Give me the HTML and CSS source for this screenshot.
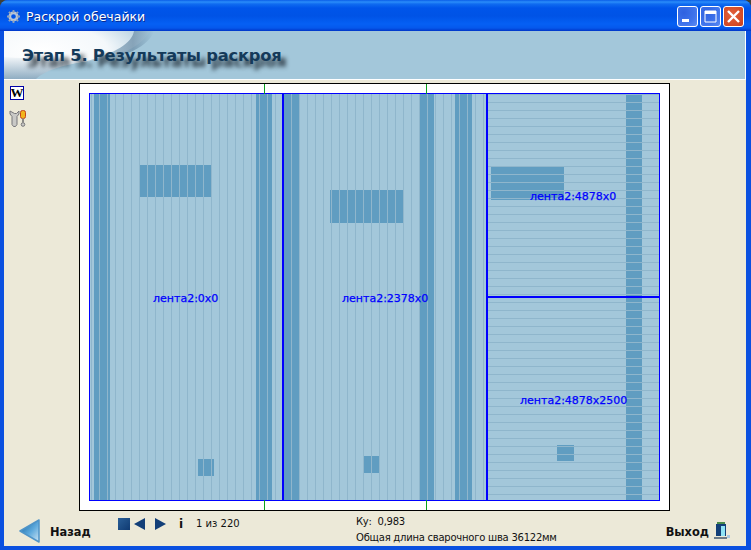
FILE: index.html
```html
<!DOCTYPE html>
<html lang="ru">
<head>
<meta charset="utf-8">
<title>Раскрой обечайки</title>
<link rel="stylesheet" href="styles.css">
</head>
<body>
<div class="window">
  <div class="titlebar">
    <svg class="app-icon" width="13" height="13" viewBox="0 0 14 14"><circle cx="7" cy="7" r="4" fill="none" stroke="#b9c6d6" stroke-width="3"/><path d="M7 0v3M7 11v3M0 7h3M11 7h3M2 2l2 2M10 10l2 2M12 2l-2 2M4 10l-2 2" stroke="#8fa2bc" stroke-width="2"/></svg>
    <span class="title-text">Раскрой обечайки</span>
    <div class="win-buttons">
      <div class="wbtn"><svg width="19" height="19" viewBox="0 0 19 19"><rect x="4" y="12" width="7" height="3" fill="#fff"/></svg></div>
      <div class="wbtn"><svg width="19" height="19" viewBox="0 0 19 19"><path d="M4 4h11v11H4z" fill="none" stroke="#fff"/><rect x="4" y="4" width="11" height="3" fill="#fff"/></svg></div>
      <div class="wbtn close"><svg width="19" height="19" viewBox="0 0 19 19"><path d="M4 4l11 11M15 4L4 15" stroke="#fff" stroke-width="2.4"/></svg></div>
    </div>
  </div>
  <div class="client">
    <div class="header">
      <svg class="swoosh" width="160" height="48" viewBox="0 0 160 48">
        <defs>
          <radialGradient id="sw" gradientUnits="userSpaceOnUse" cx="38" cy="20" r="110" gradientTransform="translate(0 12) scale(1 .4)"><stop offset="0" stop-color="#ffffff"/><stop offset=".6" stop-color="#f4f8fb"/><stop offset="1" stop-color="#b4d0e0"/></radialGradient>
          <linearGradient id="sw2" x1="0" y1="0" x2="1" y2="0"><stop offset="0" stop-color="#a3c7da"/><stop offset=".7" stop-color="#6f8fa8"/><stop offset="1" stop-color="#a3c7da"/></linearGradient>
          <linearGradient id="sw3" x1="0" y1="0" x2="0" y2="1"><stop offset="0" stop-color="#f2f6f9"/><stop offset="1" stop-color="#8fadc2"/></linearGradient>
        </defs>
        <path d="M0 0H146C138 15 116 27 78 31C60 33 30 38 0 48Z" fill="url(#sw)"/>
        <path d="M0 26C30 28 60 29 84 30C58 34 40 40 32 48H0Z" fill="url(#sw3)"/>
        <path d="M124 0H150C146 14 122 28 80 31C112 22 128 12 130 0Z" fill="url(#sw2)" opacity=".75"/>
      </svg>
      <h1 class="stage-title">Этап 5. Результаты раскроя</h1>
    </div>
    <div class="main">
      <aside class="sidebar">
        <div class="word-icon"><span>W</span></div>
        <svg class="tools-icon" width="18" height="17" viewBox="0 0 18 17">
          <path d="M1 1v3l2 2.500v8l1.500 2h2L8 14.500v-8L10 4V1L7.500 3.500h-2Z" fill="#c9c9c6" stroke="#77777a"/>
          <rect x="11.500" y="0.500" width="5" height="8" rx="2" fill="#f2b41a" stroke="#c4431a"/>
          <path d="M14 8.500v4" stroke="#8a8a86" stroke-width="2"/>
          <circle cx="14" cy="14.500" r="1.800" fill="#c9c9c6" stroke="#77777a"/>
        </svg>
      </aside>
      <div class="content">
        <div class="canvas">
          <i class="tick tick-t1"></i><i class="tick tick-t2"></i><i class="tick tick-b1"></i><i class="tick tick-b2"></i>
          <div class="plot">
            <section class="panel vert p1">
              <div class="dark d1"></div><div class="dark d2"></div><div class="dark d3"></div><div class="dark d4"></div>
              <span class="label l1">лента2:0x0</span>
            </section>
            <section class="panel vert p2">
              <div class="dark d5"></div><div class="dark d6"></div><div class="dark d7"></div><div class="dark d8"></div><div class="dark d9"></div>
              <span class="label l2">лента2:2378x0</span>
            </section>
            <div class="stack">
              <section class="panel horiz p3">
                <div class="dark col"></div><div class="dark d10"></div>
                <span class="label l3">лента2:4878x0</span>
              </section>
              <section class="panel horiz p4">
                <div class="dark col"></div><div class="dark d11"></div>
                <span class="label l4">лента2:4878x2500</span>
              </section>
            </div>
          </div>
        </div>
      </div>
    </div>
    <footer class="footer">
      <div class="back">
        <svg width="22" height="24" viewBox="0 0 22 24">
          <defs><linearGradient id="ar" x1="0" y1="0" x2="1" y2="1"><stop offset="0" stop-color="#0d5f9e"/><stop offset=".55" stop-color="#5da9dc"/><stop offset="1" stop-color="#cfe6f5"/></linearGradient></defs>
          <path d="M20 1V23L1 12Z" fill="url(#ar)" stroke="#4f94c8" stroke-width="1.500" stroke-linejoin="round"/>
        </svg>
        <b>Назад</b>
      </div>
      <div class="nav">
        <div class="nav-icons">
          <i class="stop"></i>
          <svg width="11" height="12" viewBox="0 0 11 12"><path d="M11 0V12L0 6Z" fill="#123f78"/></svg>
          <svg class="next" width="11" height="12" viewBox="0 0 11 12"><path d="M0 0V12L11 6Z" fill="#123f78"/></svg>
          <b class="info">i</b>
        </div>
        <span class="count">1 из 220</span>
      </div>
      <div class="stats">
        <div class="ku">Ку:&nbsp; 0,983</div>
        <div>Общая длина сварочного шва 36122мм</div>
      </div>
      <div class="exit">
        <b>Выход</b>
        <svg width="16" height="18" viewBox="0 0 16 18"><rect x="3" y="1" width="8" height="2" fill="#4a8a4a"/><rect x="2" y="3" width="10" height="12" fill="#123f78"/><rect x="7" y="5" width="4" height="10" fill="#8fe4f5"/><path d="M0 16h13v2H0z" fill="#6b7b88"/><path d="M13 14h3v3h-3z" fill="#a9c8e0"/></svg>
      </div>
    </footer>
  </div>
</div>
</body>
</html>
```
FILE: styles.css
```css
* { box-sizing: border-box; }
html, body { margin: 0; padding: 0; background: #3f4038; }
body { width: 751px; height: 550px; overflow: hidden; font-family: "DejaVu Sans", sans-serif; }

.window {
  width: 751px; height: 550px; display: flex; flex-direction: column;
  border-radius: 8px 8px 0 0; overflow: hidden; background: #0a50e0;
}
.titlebar {
  height: 31px; flex: none; display: flex; align-items: center; padding: 0 7px 0 7px;
  background: linear-gradient(180deg, #0a5ee8 0, #2a8dfa 2px, #0f6bf0 4px, #0055ea 8px, #0053e6 16px, #0560f4 24px, #0558ec 28px, #0036c8 31px);
}
.app-icon { flex: none; margin-top: 2px; }
.title-text { margin-left: 6px; margin-top: 2px; color: #fff; font-size: 12.500px; text-shadow: 1px 1px 0 #0a2a8c; }
.win-buttons { margin-left: auto; display: flex; gap: 2px; margin-top: 1px; }
.wbtn {
  width: 21px; height: 21px; border: 1px solid #fff; border-radius: 3px;
  background: radial-gradient(circle at 30% 30%, #2f61e0, #3f74ec 60%, #5c8cf2);
}
.wbtn svg { display: block; }
.wbtn.close { background: radial-gradient(circle at 40% 40%, #e2613c, #d34a26 70%, #c23c1e); }

.client {
  flex: 1; min-height: 0; display: flex; flex-direction: column;
  margin: 0 5px 4px 4px; background: #ece9d8;
}
.header {
  position: relative; height: 49px; flex: none; background: #a3c7da;
  border-bottom: 1px solid #fff; border-right: 1px solid #fff; overflow: hidden;
}
.swoosh { position: absolute; left: 0; top: 0; }
.stage-title {
  position: relative; margin: 0; padding: 14px 0 0 18px; font-size: 16.300px; line-height: 22px; font-weight: 700;
  color: #143a5a; text-shadow: 5px 6px 4px rgba(25, 35, 45, .85);
  letter-spacing: -.2px;
}

.main { flex: none; display: flex; }
.sidebar { width: 75px; flex: none; display: flex; flex-direction: column; padding: 6px 0 0 5px; }
.word-icon {
  width: 14px; height: 14px; margin-left: 1px; border: 1px solid #0000a8; background: #fff;
  display: flex; align-items: center; justify-content: center; overflow: hidden;
}
.word-icon span { font: 700 13px/12px "Liberation Serif", serif; color: #000; }
.tools-icon { margin-top: 10px; }
.content { padding-top: 3px; }

.canvas {
  position: relative; width: 591px; height: 428px; background: #fff;
  border: 1px solid #000; padding: 9px;
}
.tick { position: absolute; width: 1px; height: 10px; background: #0aa01e; }
.tick-t1 { left: 184px; top: 0; }
.tick-t2 { left: 346px; top: 0; }
.tick-b1 { left: 184px; bottom: 0; }
.tick-b2 { left: 346px; bottom: 0; }

.plot { display: flex; width: 571px; height: 408px; border: 1px solid #0000ff; }
.panel { position: relative; background: #a3c7da; }
.panel::after { content: ""; position: absolute; inset: 0; pointer-events: none; }
.vert::after { background: linear-gradient(90deg, #8fb6cc 1px, transparent 1px) repeat-x; background-size: 8px 100%; }
.horiz::after { background: linear-gradient(180deg, #8fb6cc 1px, transparent 1px) repeat-y; background-size: 100% 8px; }
.p1 { width: 194px; border-right: 2px solid #0000ff; }
.p1::after { background-position-x: 1px; }
.p2 { width: 204px; border-right: 2px solid #0000ff; }
.p2::after { background-position-x: 7px; }
.stack { width: 171px; display: flex; flex-direction: column; }
.p3 { height: 204px; border-bottom: 2px solid #0000ff; }
.p4 { height: 202px; }
.p3::after { background-position-y: 0; }
.p4::after { background-position-y: 4px; }

.dark { position: absolute; background: #609dc1; }
.d1 { left: 4px; top: 0; width: 16px; height: 100%; }
.d2 { left: 166px; top: 0; width: 16px; height: 100%; }
.d3 { left: 50px; top: 71px; width: 71px; height: 32px; }
.d4 { left: 108px; top: 365px; width: 16px; height: 17px; }
.d5 { left: 0; top: 0; width: 15px; height: 100%; }
.d6 { left: 135px; top: 0; width: 15px; height: 100%; }
.d7 { left: 171px; top: 0; width: 17px; height: 100%; }
.d8 { left: 46px; top: 96px; width: 73px; height: 33px; }
.d9 { left: 80px; top: 362px; width: 15px; height: 17px; }
.col { left: 138px; top: 0; width: 16px; height: 100%; }
.d10 { left: 3px; top: 73px; width: 73px; height: 33px; }
.d11 { left: 69px; top: 147px; width: 17px; height: 16px; }

.label { position: absolute; z-index: 1; color: #0000ff; font-size: 11px; line-height: 13px; white-space: nowrap; -webkit-text-stroke: .25px #0000ff; }
.l1 { left: 63px; top: 198px; }
.l2 { left: 58px; top: 198px; }
.l3 { left: 42px; top: 96px; }
.l4 { left: 32px; top: 96px; }

.footer { flex: 1; min-height: 0; display: flex; position: relative; font-size: 10px; color: #111; }
.back { width: 112px; flex: none; display: flex; align-items: flex-start; padding: 8px 0 0 15px; }
.back b, .exit b { font-size: 11.400px; line-height: 14px; color: #111; }
.back b { margin: 6px 0 0 9px; }
.nav { width: 240px; flex: none; display: flex; align-items: flex-start; padding: 7px 0 0 2px; }
.nav-icons { display: flex; align-items: center; }
.stop { width: 12px; height: 12px; background: linear-gradient(135deg, #2a5f98, #0f3a72); }
.nav-icons svg { margin-left: 4px; }
.nav-icons .next { margin-left: 10px; }
.info { margin-left: 13px; width: 5px; font: 700 12px/12px "DejaVu Sans", sans-serif; color: #111; }
.count { margin-left: 12px; line-height: 12px; }
.stats { line-height: 16px; padding-top: 3px; letter-spacing: -.24px; }
.ku { line-height: 16px; }
.exit { margin-left: auto; padding: 9px 16px 0 0; display: flex; align-items: flex-start; gap: 5px; }
.exit b { margin-top: 5px; }
.exit svg { margin-top: 1px; }
```
